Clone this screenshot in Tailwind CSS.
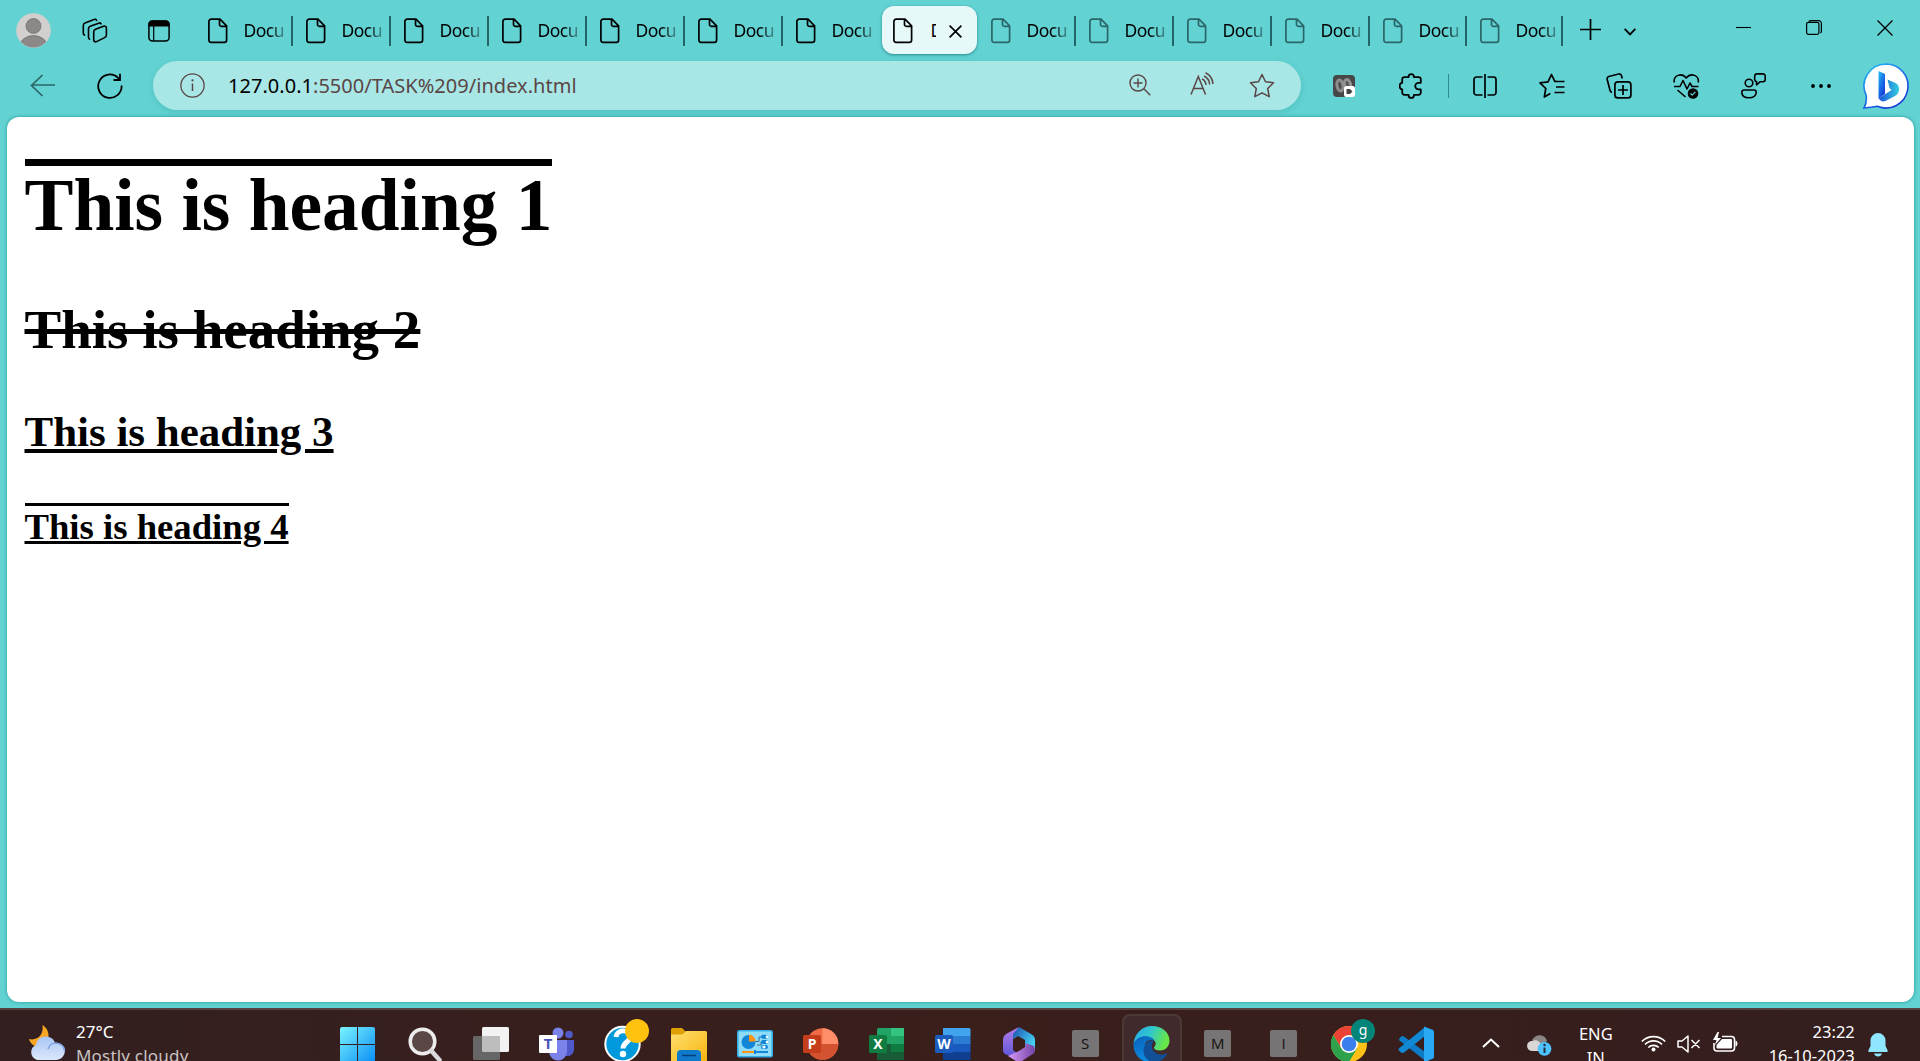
<!DOCTYPE html>
<html lang="en">
<head>
<meta charset="utf-8">
<title>Document</title>
<script src="https://cdn.jsdelivr.net/npm/@tailwindcss/browser@4"></script>
</head>
<body class="w-[1920px] h-[1061px] overflow-hidden bg-[#62d2d3] flex flex-col font-['Noto_Sans',sans-serif] text-black">

<svg class="hidden">
  <symbol id="doc" viewBox="0 0 20 26"><path d="M3.2 1.2H12l6.600 6.600V22a2.400 2.400 0 0 1-2.400 2.400H3.200A2.400 2.400 0 0 1 .9 22V3.500A2.300 2.300 0 0 1 3.200 1.200zM11.500 1.500V6.500a1.800 1.800 0 0 0 1.800 1.800h5" fill="none" stroke="currentColor" stroke-width="1.700" stroke-linejoin="round"/></symbol>
</svg>

<!-- Tab strip -->
<header class="h-[61px] shrink-0 flex">
  <div class="w-[195.500px] shrink-0 flex items-start pl-4 pt-[13px]">
    <svg class="w-[35px] h-[35px]" viewBox="0 0 35 35"><defs><clipPath id="av"><circle cx="17.500" cy="17.500" r="17"/></clipPath></defs><circle cx="17.500" cy="17.500" r="17.300" fill="#d2d0ce"/><g clip-path="url(#av)" fill="#8b8887" stroke="#6f6d6c" stroke-width=".7"><circle cx="17.500" cy="13" r="7.500"/><ellipse cx="17.500" cy="34" rx="14" ry="11.500"/></g></svg>
    <svg class="w-[26px] h-[26px] ml-[31px] mt-[5px]" viewBox="0 0 26 26" fill="none" stroke="#000" stroke-width="1.600" stroke-linecap="round" stroke-linejoin="round"><path d="M13.500 11.300l8-3.100a2 2 0 0 1 2.900 1.900V17a2.800 2.800 0 0 1-1.800 2.600l-8 4a2 2 0 0 1-2.900-1.900v-7.700a2.800 2.800 0 0 1 1.800-2.700z"/><path d="M19 5.800a1.800 1.800 0 0 0-2.300-.6L8.200 8.200a2.600 2.600 0 0 0-1.700 2.400v8.600a2.500 2.500 0 0 0 1 2"/><path d="M14.500 2.300a1.800 1.800 0 0 0-2.500-.9L3 5a2.600 2.600 0 0 0-1.700 2.400v7.500c0 1.200.4 1.700 1.200 2.300"/></svg>
    <svg class="w-[22px] h-[22px] ml-10 mt-[7px]" viewBox="0 0 22 22"><rect x=".9" y=".9" width="20.200" height="20.200" rx="3.500" fill="none" stroke="#000" stroke-width="1.500"/><path d="M.5 6.500V4A3.500 3.500 0 0 1 4 .5h14A3.500 3.500 0 0 1 21.500 4v2.500z"/><path d="M5.700 6v15" stroke="#000" stroke-width="1.200"/></svg>
  </div>
  <div id="tabs" class="flex text-[17.500px] tracking-[-0.5px]"></div>
  <svg class="w-[21px] h-[21px] mt-[19px] ml-4 shrink-0" viewBox="0 0 21 21"><path d="M10.500 0v21M0 10.500h21" stroke="#000" stroke-width="1.700"/></svg>
  <svg class="w-[12px] h-[8px] mt-[28px] ml-[23px] shrink-0" viewBox="0 0 12 8"><path d="M.6 .8L6 6.300 11.400 .8" fill="none" stroke="#000" stroke-width="1.900"/></svg>
  <div class="ml-auto flex items-start pr-[27px] pt-5">
    <svg class="w-[15px] h-[15px]" viewBox="0 0 15 15"><path d="M0 7.500h15" stroke="#000" stroke-width="1.100"/></svg>
    <svg class="w-[16px] h-[16px] ml-[55px]" viewBox="0 0 16 16" fill="none" stroke="#000" stroke-width="1.200"><rect x=".6" y="2.300" width="12.300" height="12" rx="1.800"/><path d="M2.800 1.600Q3.400.6 5 .6h7.500A2.900 2.900 0 0 1 15.400 3.500V11q0 1.300-1 2"/></svg>
    <svg class="w-[16px] h-[16px] ml-[55px]" viewBox="0 0 16 16"><path d="M.5 .5l15 15M15.500 .5l-15 15" stroke="#000" stroke-width="1.300"/></svg>
  </div>
</header>

<!-- Toolbar -->
<nav class="h-[56px] shrink-0 flex">
  <div class="w-[153px] shrink-0 flex pl-[30px] pt-3">
    <svg class="w-[25px] h-[25px]" viewBox="0 0 25 25"><path d="M12.500 2L1.500 12.500l11 10.500M1.500 12H25" fill="none" stroke="#2b6668" stroke-width="1.700"/></svg>
    <svg class="w-[26px] h-[26px] ml-[42px]" viewBox="0 0 26 26"><path d="M24.600 12.500a11.700 11.700 0 1 1-3.500-7.700l1.400 1.400M23 .8v6.200h-6.500" fill="none" stroke="#000" stroke-width="1.800"/></svg>
  </div>
  <div class="w-[1148px] h-[49px] shrink-0 rounded-full bg-[#a8e7e5] shadow-[0_2px_6px_rgba(0,110,110,0.18)] flex pl-[27px] text-[#5a4647]">
    <svg class="w-[25px] h-[25px] mt-3" viewBox="0 0 25 25"><circle cx="12.500" cy="12.500" r="11.600" fill="none" stroke="currentColor" stroke-width="1.300"/><path d="M12.500 10.500V18" stroke="currentColor" stroke-width="1.500"/><circle cx="12.500" cy="7.300" r="1.100" fill="currentColor"/></svg>
    <div class="ml-[23px] w-[361px] text-[20px] tracking-[0.030px] leading-[49px] whitespace-nowrap"><span class="text-black">127.0.0.1</span>:5500/TASK%209/index.html</div>
    <svg class="w-[22px] h-[22px] ml-[540px] mt-[13px]" viewBox="0 0 22 22" fill="none" stroke="currentColor" stroke-width="1.400"><circle cx="9" cy="9" r="8"/><path d="M9 4.500v9M4.500 9h9M14.800 14.800l6.500 6.500"/></svg>
    <svg class="w-[24px] h-[24px] ml-[39px] mt-[11px]" viewBox="0 0 24 24" fill="none" stroke="currentColor" stroke-width="1.500"><path d="M1 22.500L8.300 4.500 15.500 22.500M3.500 16.500h9.500"/><path d="M12 7c2 .8 3.700 3 4 6M14 4c3 1.300 5.300 4.300 5.700 8.500M15.500 .8c4 1.700 7 5.500 7.500 11.200"/></svg>
    <svg class="w-[26px] h-[26px] ml-[35px] mt-3" viewBox="0 0 26 26"><path d="M13 1.500l3.500 7.300 8 1-5.800 5.700 1.500 8.200L13 19.800l-7.200 3.900 1.500-8.200L1.500 9.800l8-1z" fill="none" stroke="currentColor" stroke-width="1.500" stroke-linejoin="round"/></svg>
  </div>
  <div class="flex h-[49px] items-center pl-8 text-black">
    <svg class="w-[22px] h-[22px]" viewBox="0 0 22 22"><rect width="22" height="22" rx="4" fill="#484747"/><ellipse cx="7" cy="10.500" rx="3" ry="5.500" transform="rotate(-10 7 10.500)" fill="#4c4b4b" stroke="#8d8d8d" stroke-width="3"/><ellipse cx="14.500" cy="9.500" rx="3" ry="5" transform="rotate(-14 14.500 9.500)" fill="#555" stroke="#929292" stroke-width="3"/><rect x="11" y="11" width="11" height="11" rx="2.500" fill="#fff"/><path d="M13.500 14h3.500l2.500 2.500L17 19h-3.500z" fill="#444"/></svg>
    <svg class="w-[24px] h-[26px] ml-[44px]" viewBox="0 0 24 26" fill="none" stroke="currentColor" stroke-width="1.800" stroke-linejoin="round"><path d="M5.500 4.200h4C9.500 0 15 0 15 4.200h4.500a2.300 2.300 0 0 1 2.300 2.300V9.800h-2.300a3.300 3.300 0 0 0 0 6.600h2.300v3.200a2.300 2.300 0 0 1-2.300 2.300H15c0 4-5.500 4-5.500 0h-4a2.300 2.300 0 0 1-2.300-2.300v-3.200C-.2 16.400-.2 9.800 3.200 9.800V6.500a2.300 2.300 0 0 1 2.300-2.300z"/></svg>
    <div class="w-px h-6 ml-[25px] bg-[#2f8d90]"></div>
    <svg class="w-[24px] h-[24px] ml-[24px]" viewBox="0 0 24 24" fill="none" stroke="currentColor" stroke-width="1.700"><path d="M9.500 3H3.500A2.500 2.500 0 0 0 1 5.500v13A2.500 2.500 0 0 0 3.500 21h6M14.500 3h6A2.500 2.500 0 0 1 23 5.500v13a2.500 2.500 0 0 1-2.500 2.500h-6M12 0v24"/></svg>
    <svg class="w-[26px] h-[26px] ml-[42px]" viewBox="0 0 26 26" fill="none" stroke="currentColor" stroke-width="1.700" stroke-linejoin="round"><path d="M16 8.800l-3.500-7.300-3.500 7.300-8 1 5.800 5.700-1.500 8.500 6-3.400M15.500 8.500h10M17 14h8.500M15.500 19.500h10M17 8.500l-1-.5"/></svg>
    <svg class="w-[26px] h-[26px] ml-[41px]" viewBox="0 0 26 26" fill="none" stroke="currentColor" stroke-width="1.700"><path d="M6 19.500A3 3 0 0 1 4 17.300L1.200 6.500a2.400 2.400 0 0 1 1.700-3L12.500 1a2.400 2.400 0 0 1 3 1.700l.8 2.800"/><rect x="8.900" y="8.900" width="16" height="16" rx="3"/><path d="M17 12v10M12 17h10"/></svg>
    <svg class="w-[27px] h-[26px] ml-[41px]" viewBox="0 0 27 26" fill="none" stroke="currentColor" stroke-width="1.600" stroke-linejoin="round"><path d="M1.300 9.500C0 2.500 8.500-1 13.200 5 18-1 26.500 2.500 25.200 9.500M1 13.500h6l3-6 4 8.500 3-6 2 3.500h6.500M4.500 17l8 7"/><circle cx="20" cy="20.500" r="5.300" fill="#000" stroke="none"/><path d="M17.500 20.500l1.700 1.700 3.200-3.300" stroke="#62d2d3" stroke-width="1.200"/></svg>
    <svg class="w-[25px] h-[26px] ml-[41px]" viewBox="0 0 25 26" fill="none" stroke="currentColor" stroke-width="1.600" stroke-linejoin="round"><circle cx="8" cy="10" r="3.800"/><path d="M3 17h10a2.200 2.200 0 0 1 2.200 2.200c0 3.500-3 5.600-7.200 5.600s-7.200-2-7.200-5.600A2.200 2.200 0 0 1 3 17zM15.500.9h6.500a2.200 2.200 0 0 1 2.200 2.200v3.500a2.200 2.200 0 0 1-2.200 2.200h-3l-3.500 3V8.600a2.300 2.300 0 0 1-1.800-2.200V3.100A2.200 2.200 0 0 1 15.500.9z"/></svg>
    <svg class="w-[20px] h-[4px] ml-[45px]" viewBox="0 0 20 4"><circle cx="2" cy="2" r="1.900"/><circle cx="10" cy="2" r="1.900"/><circle cx="18" cy="2" r="1.900"/></svg>
    <svg class="w-[48px] h-[48px] ml-[31px] shrink-0" viewBox="0 0 48 48"><defs><linearGradient id="bg1" x1="0" y1="0" x2=".7" y2="1"><stop stop-color="#27c2f5"/><stop offset=".6" stop-color="#1769e8"/><stop offset="1" stop-color="#1736d8"/></linearGradient><linearGradient id="bg2" x1="0" y1="0" x2="1" y2="0"><stop stop-color="#1c50d8"/><stop offset="1" stop-color="#35cfe0"/></linearGradient></defs><path d="M24 2a22 22 0 1 1-8.500 42.300Q9 45.500 2 46q3-5.500 2.200-12.500A22 22 0 0 1 24 2z" fill="#fff" stroke="url(#bg1)" stroke-width="1.600"/><path d="M16.500 9l6.500 3v20l-6.500 4.500z" fill="url(#bg1)"/><path d="M25.500 17.500l8 3.500q4 2 3.500 7-.5 4-4 6l-9.500 5q-4 1.500-7-2.500l13-8.500-2-2z" fill="url(#bg2)"/></svg>
  </div>
</nav>

<!-- Page -->
<main class="ml-[7px] w-[1907px] h-[885px] shrink-0 rounded-xl bg-white shadow-[0_0_3px_1px_rgba(20,130,130,0.45)] pl-[17.500px] pt-[42px] font-['Liberation_Serif',serif] font-bold flex flex-col items-start">
  <h1 class="h-[87px] border-t-7 border-black text-[73.350px] leading-[80px]">This is heading 1</h1>
  <h2 class="mt-[52px] h-[64px] text-[55px] leading-[64px] line-through decoration-[5px]">This is heading 2</h2>
  <h3 class="mt-[45px] h-[50px] text-[42.950px] leading-[50px] underline decoration-[4px] underline-offset-[3px]">This is heading 3</h3>
  <h4 class="mt-[46px] h-[46px] border-t-3 border-black text-[36.700px] leading-[42px] underline decoration-[3px] underline-offset-[2px]">This is heading 4</h4>
</main>

<!-- Taskbar -->
<footer class="mt-[6px] h-[53px] shrink-0 overflow-hidden border-t-2 border-[#54433f] bg-linear-to-r from-[#331f20] via-[#3a1f1b] to-[#341e1e] flex text-white">
  <div class="w-[325px] shrink-0 flex pl-7 pt-[15px]">
    <svg class="w-[38px] h-[36px] shrink-0" viewBox="0 0 38 36"><defs><linearGradient id="cl" x1="0" y1="0" x2="0" y2="1"><stop stop-color="#a9c5f5"/><stop offset="1" stop-color="#dbe8fb"/></linearGradient></defs><path d="M14.500 0C24 6 22 20 11 22 6 22 2 18 1 14c8 2 15-4 13.500-14z" fill="#f6a623"/><path d="M9 35a8 8 0 0 1-1-15C9 9 25 9 27 18c14-1 12 17 1 17z" fill="url(#cl)"/><path d="M20 24q2-6 8-6 8 1 8.500 8" fill="none" stroke="#7fa4e8" stroke-width="1.500"/></svg>
    <div class="ml-[10px] -mt-[5px] text-[17px] leading-[24px] whitespace-nowrap"><div>27°C</div><div class="text-[#c9c2c1] tracking-[0.200px]">Mostly cloudy</div></div>
  </div>

  <div class="grid grid-cols-[repeat(17,66.060px)] shrink-0 justify-items-center">
    <svg class="w-[36px] h-[36px] mt-[17px]" viewBox="0 0 36 36"><defs><linearGradient id="wn" x1="0" y1="0" x2="1" y2="1"><stop stop-color="#7af3ff"/><stop offset="1" stop-color="#0a8ff5"/></linearGradient></defs><path d="M0 2Q0 0 2 0h15v17H0zM18 0h15q2 0 2 2v15H18zM0 18h17v17H0zM18 18h17v17H18z" fill="url(#wn)"/></svg>
    <svg class="w-[34px] h-[36px] mt-[17px] ml-[2px]" viewBox="0 0 34 36"><circle cx="14.500" cy="14.500" r="12.300" fill="#5a4746" stroke="#eeecec" stroke-width="3.500"/><path d="M23.500 24l8 9" stroke="#d9d9dc" stroke-width="4.500" stroke-linecap="round"/></svg>
    <svg class="w-[36px] h-[34px] mt-[17px] ml-[2px]" viewBox="0 0 36 34"><rect x="9" width="27" height="25" rx="1.500" fill="#f2f2f2"/><rect y="9" width="27" height="24" rx="1.500" fill="#666"/><path d="M9 9h18v16H10.500Q9 25 9 23.500z" fill="#bdbdbd"/></svg>
    <svg class="w-[36px] h-[34px] mt-[17px] ml-[2px]" viewBox="0 0 36 34"><circle cx="30" cy="7.500" r="3.800" fill="#5059c9"/><circle cx="19" cy="6" r="5.500" fill="#7b83eb"/><path d="M24 13h11v9.500a6.500 6.500 0 0 1-9 6z" fill="#5059c9"/><path d="M11 13h17v11a9 9 0 0 1-18 1z" fill="#7b83eb"/><rect y="8" width="18" height="18" rx="1" fill="#fff"/><text x="9" y="22" text-anchor="middle" class="text-[15px] font-bold" fill="#4b53bc">T</text></svg>
    <svg class="w-[46px] h-[44px] mt-[8px] ml-[9px]" viewBox="0 0 46 44"><circle cx="18.500" cy="26" r="17.200" fill="#0099dc" stroke="#fff" stroke-width="2"/><path d="M12 19c1-8.500 15-8 14 .5-.5 4.500-7 5-7 11" fill="none" stroke="#fff" stroke-width="5"/><circle cx="19" cy="36" r="3.200" fill="#fff"/><circle cx="33" cy="13" r="12" fill="#ffc20e"/></svg>
    <svg class="w-[36px] h-[34px] mt-[18px] ml-[2px]" viewBox="0 0 36 34"><defs><linearGradient id="fo" x1="0" y1="0" x2="1" y2="1"><stop stop-color="#ffdf72"/><stop offset="1" stop-color="#f7b50c"/></linearGradient></defs><path d="M0 1.500Q0 0 1.500 0H11l4 4H20v5H0z" fill="#dfa006"/><path d="M0 6.500h11.500L15 3h19.500Q36 3 36 4.500V34H0z" fill="url(#fo)"/><path d="M6 34v-8q0-4 4-4h16q4 0 4 4v8z" fill="#0f79cc"/><path d="M11 27.500h14" stroke="#083e77" stroke-width="1.500"/></svg>
    <svg class="w-[36px] h-[28px] mt-[20px] ml-[2px]" viewBox="0 0 36 28"><rect x=".8" y=".8" width="34.400" height="26" rx="1.500" fill="#8fdcf8" stroke="#32aee7" stroke-width="1.600"/><circle cx="11.500" cy="12" r="7" fill="#1386d8"/><path d="M12 11.500V4.500a7 7 0 0 1 6.500 7z" fill="#ff9412"/><path d="M18.500 11.500h3.500V7h4M20 15h4v-3h2" fill="none" stroke="#356f93" stroke-width="1"/><path d="M26 6.800h3M26 12h3M26 17h3" stroke="#1386d8" stroke-width="4" stroke-linecap="round"/><circle cx="30" cy="6.800" r="1.300" fill="#fff"/><circle cx="30" cy="12" r="1.300" fill="#fff"/><circle cx="27" cy="17" r="1.600" fill="#fff"/><path d="M5 22h13" stroke="#ff9412" stroke-width="2"/><path d="M18 22h13M18 20v4" stroke="#1386d8" stroke-width="2"/></svg>
    <svg class="w-[36px] h-[34px] mt-[17px] ml-[2px]" viewBox="0 0 36 34"><circle cx="19.500" cy="17" r="15.800" fill="#ed6c47"/><path d="M19.500 1.200A15.800 15.800 0 0 1 35.300 17H19.500z" fill="#ff8f6b"/><path d="M3.700 17h31.600a15.800 15.800 0 0 1-31.600 0z" fill="#d35230"/><rect y="8" width="18" height="18" rx="1.500" fill="#c43e1c"/><text x="9" y="22" text-anchor="middle" class="text-[14px] font-bold" fill="#fff">P</text></svg>
    <svg class="w-[36px] h-[34px] mt-[17px] ml-[2px]" viewBox="0 0 36 34"><path d="M8 3Q8 1 9.500 1H35v32H8z" fill="#21a366"/><path d="M22 1h13v8H22z" fill="#33c481"/><path d="M22 17h13v8H22z" fill="#107c41"/><path d="M8 25h27v8H8z" fill="#185c37"/><path d="M8 17h14v8H8z" fill="#185c37"/><rect y="8" width="18" height="18" rx="1.500" fill="#107c41"/><text x="9" y="22" text-anchor="middle" class="text-[14px] font-bold" fill="#fff">X</text></svg>
    <svg class="w-[36px] h-[34px] mt-[17px] ml-[2px]" viewBox="0 0 36 34"><path d="M8 1h26q1.500 0 1.500 1.500V9H8z" fill="#41a5ee"/><path d="M8 9h27.500v8H8z" fill="#2b7cd3"/><path d="M8 17h27.500v8H8z" fill="#185abd"/><path d="M8 25h27.500v7q0 1-1 1H8z" fill="#103f91"/><rect y="8" width="18" height="18" rx="1.500" fill="#1b5cbe"/><text x="9" y="22" text-anchor="middle" class="text-[14px] font-bold" fill="#fff">W</text></svg>
    <svg class="w-[34px] h-[36px] mt-[16px] ml-[2px]" viewBox="0 0 34 36"><defs><linearGradient id="m1" x1="0" y1="0" x2="0" y2="1"><stop stop-color="#b47ce8"/><stop offset="1" stop-color="#5c55d8"/></linearGradient><linearGradient id="m2" x1="0" y1="0" x2="1" y2=".6"><stop stop-color="#1a4fae"/><stop offset="1" stop-color="#45d4f5"/></linearGradient><linearGradient id="m3" x1="0" y1="0" x2="1" y2="0"><stop stop-color="#d99af5"/><stop offset="1" stop-color="#7343a8"/></linearGradient></defs><path d="M16 1.500L4 8Q1 10 1 13v11q0 3 3 4.500l7 3 5-3.500-5-4V13l6-4z" fill="url(#m1)"/><path d="M17 1l12 7q4 2 4 6v11l-10-5v-6l-7-4-5 3V8z" fill="url(#m2)"/><path d="M33 24q0 3-3 4.500L20 35q-3 1.500-6 0l-8-5 11-5 6-4q1-1 0-4l9 3z" fill="url(#m3)"/></svg>
    <div class="size-[27px] mt-[20px] ml-px rounded-[2px] bg-[#767474] text-[#141010] text-[15px] leading-[27px] text-center font-['Open_Sans',sans-serif]">S</div>
    <div class="w-[60px] h-[60px] mt-[4px] ml-[2px] rounded-lg bg-[#412a2c] border-2 border-[#4c3838] flex justify-center items-start pt-[10px]"><svg class="w-[37px] h-[37px] shrink-0" viewBox="0 0 37 37"><defs><linearGradient id="e1" x1="0" y1="0" x2="1" y2=".3"><stop stop-color="#25a9e8"/><stop offset=".5" stop-color="#30c6cf"/><stop offset="1" stop-color="#67e745"/></linearGradient><linearGradient id="e2" x1="0" y1="0" x2=".5" y2="1"><stop stop-color="#0a60b8"/><stop offset="1" stop-color="#0b90e5"/></linearGradient></defs><path d="M.5 18C1.500 7 9.500 0 19 0c10.500 0 17.500 7 17.500 14.500 0 6-4 10-9.500 10-4 0-6-1.300-6-3 0-1 2.300-2 1.500-5C20 10 6 7 .5 18z" fill="url(#e1)"/><path d="M12.500 17C10 27 17 35 25 35.500q-3 1.300-6 1.300C8 36.800 0 28 .5 18 4 9 17 8 21.500 14c-4-1-8 1-9 3z" fill="url(#e2)"/><path d="M21 14c-6 0-11 5-10.500 12 .5 6 5.500 10.500 12 10.200 5-.7 9-3.700 11.500-7.700.3-1-.5-1.300-1.500-.8-8 3.500-18-3.700-11.500-13.700z" fill="#114f96"/></svg></div>
    <div class="size-[27px] mt-[20px] ml-[2px] rounded-[2px] bg-[#767474] text-[#141010] text-[15px] leading-[27px] text-center font-['Open_Sans',sans-serif]">M</div>
    <div class="size-[27px] mt-[20px] ml-[2px] rounded-[2px] bg-[#767474] text-[#141010] text-[15px] leading-[27px] text-center font-['Open_Sans',sans-serif]">I</div>
    <svg class="w-[44px] h-[44px] mt-[8px] ml-[9px]" viewBox="0 0 44 44"><circle cx="18" cy="26" r="18" fill="#fbc116"/><path d="M2.400 17A18 18 0 0 1 33.600 17H18L10 30z" fill="#ea4335"/><path d="M2.400 17A18 18 0 0 0 18 44l8-13.500L18 26l-8 4z" fill="#2da14c"/><circle cx="18" cy="26" r="9" fill="#fff"/><circle cx="18" cy="26" r="7.300" fill="#3b7ded"/><circle cx="32" cy="13" r="12" fill="#048577"/><text x="32" y="17" text-anchor="middle" class="text-[14px]" fill="#fff">g</text></svg>
    <svg class="w-[36px] h-[36px] mt-[16px] ml-[2px]" viewBox="0 0 36 36"><path d="M2 11.500q2-2.500 4-1L27 26v8.500L.8 14z" fill="#0c7cc9"/><path d="M2 25.500q2 2.500 4 1L27 10V1L.8 22.500q-1 1.500 1.200 3z" fill="#1189d4"/><path d="M26 .5L35 4q1 .5 1 2v25q0 1-1 1.500L27 36l-1-1z" fill="#29a8f4"/></svg>
  </div>

  <div class="flex items-start">
    <svg class="w-[18px] h-[10px] mt-[28px] ml-[34px]" viewBox="0 0 18 10"><path d="M1 9l8-7.500L17 9" fill="none" stroke="#fff" stroke-width="2"/></svg>
    <svg class="w-[25px] h-[21px] mt-[25px] ml-[27px]" viewBox="0 0 25 21"><path d="M5 5C9-2 18-1 20 6l-8 5z" fill="#8c8686"/><path d="M5 16c-7-1-6-10 0-10 4-2 8 0 9 4l-2 6z" fill="#d9d6d6"/><circle cx="17.500" cy="13.800" r="6.900" fill="#4cc2ff"/><path d="M17.500 12.500v5.500" stroke="#20303a" stroke-width="2"/><circle cx="17.500" cy="10" r="1.200" fill="#20303a"/></svg>
    <div class="w-[40px] ml-[24px] mt-[12px] text-[16.500px] leading-[24px] text-center">ENG<br>IN</div>
    <svg class="w-[25px] h-[18px] mt-[24px] ml-[25px]" viewBox="0 0 25 18" fill="none" stroke="#fff" stroke-width="1.700"><path d="M.8 7.500a16.500 16.500 0 0 1 23.400 0M4 10.500a12 12 0 0 1 17 0M7.300 13.500a7.300 7.300 0 0 1 10.400 0"/><circle cx="12.500" cy="15.500" r="2" fill="#fff" stroke="none"/></svg>
    <svg class="w-[24px] h-[18px] mt-[25px] ml-[11px]" viewBox="0 0 24 18" fill="none" stroke="#fff" stroke-width="1.500" stroke-linejoin="round"><path d="M1 6v6h4l6 5V1L5 6zM14.500 5l8 8M22.500 5l-8 8"/></svg>
    <svg class="w-[25px] h-[21px] mt-[22px] ml-[12px]" viewBox="0 0 25 21"><path d="M9 4.500h9.500a3 3 0 0 1 3 3v8.500a3 3 0 0 1-3 3H4a3 3 0 0 1-3-3V11" fill="none" stroke="#fff" stroke-width="1.600"/><path d="M9 7h9q1 0 1 1v7.500q0 1-1 1H4.500q-1 0-1-1V13z" fill="#fff"/><path d="M22.500 8.500q2 .5 2 3t-2 3z" fill="#fff"/><path d="M4.500 0L0 8h3.500L2 13l6-7H4.500L6 0z" fill="#fff"/></svg>
    <div class="w-[100px] ml-[17px] mt-[10px] text-[16.500px] leading-[24px] text-right whitespace-nowrap">23:22<br>16-10-2023</div>
    <svg class="w-[20px] h-[24px] mt-[23px] ml-[13px]" viewBox="0 0 20 24"><path d="M10 0a7.500 7.500 0 0 1 7.500 7.500V13l2.200 4.500q.3 1.500-1 1.500H1.300Q0 19 .3 17.500L2.500 13V7.500A7.500 7.500 0 0 1 10 0zM6 20.500h8q-1 3-4 3t-4-3z" fill="#8fe6ff"/></svg>
  </div>
</footer>

<script>
  const tabs = document.getElementById('tabs');
  for (let i = 0; i < 14; i++) {
    const tab = document.createElement('div');
    if (i === 7) {
      tab.className = 'w-[95px] h-[48px] mt-[6px] mr-[2px] rounded-[12px] bg-[#e6f8f7] shadow-[0_1px_3px_rgba(0,90,90,0.6)] flex shrink-0 pl-[11px]';
      tab.innerHTML = '<svg class="w-[20px] h-[26px] mt-[12px] shrink-0"><use href="#doc"/></svg><span class="w-[5px] ml-[18px] overflow-hidden leading-[49px]">D</span><svg class="w-[13px] h-[13px] mt-[19px] ml-[13px] shrink-0" viewBox="0 0 13 13"><path d="M.6.6l11.800 11.800M12.400.6L.6 12.400" stroke="#000" stroke-width="1.700"/></svg>';
    } else {
      tab.className = (i === 13 ? 'w-[96px]' : i === 12 ? 'w-[97px]' : 'w-[98px]') + ' h-[61px] flex shrink-0';
      const icon = i > 7 ? 'w-[20px] h-[26px] mt-[18px] ml-[12px] shrink-0 text-[#2b6668]' : 'w-[20px] h-[26px] mt-[18px] ml-[12px] shrink-0';
      tab.innerHTML = '<svg class="' + icon + '"><use href="#doc"/></svg>'
        + '<span class="ml-[16px] w-[43px] leading-[61px] whitespace-nowrap bg-linear-to-r from-black from-60% to-black/15 bg-clip-text text-transparent">Docu</span>'
        + (i === 6 ? '' : '<span class="ml-auto mr-px mt-4 w-[1.500px] h-[30px] bg-[#236568]"></span>');
    }
    tabs.appendChild(tab);
  }
</script>
</body>
</html>
